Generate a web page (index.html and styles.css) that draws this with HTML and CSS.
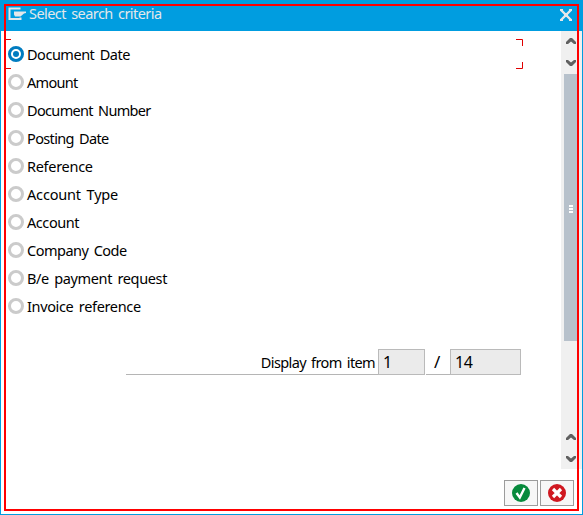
FILE: index.html
```html
<!DOCTYPE html>
<html lang="en">
<head>
<meta charset="utf-8">
<title>Select search criteria</title>
<link rel="stylesheet" href="styles.css">
</head>
<body>
<div class="window">
  <header class="titlebar">
    <svg class="logo" width="18" height="13" viewBox="0 0 18 13"><path d="M12.500 1.500H1.500v10.500h11V10.500" fill="none" stroke="#e4e8ea" stroke-width="2"/><path d="M6 4.500h12v1.500l-2 .5-3.500 3H7L6 7.500z" fill="#e4e8ea"/></svg>
    <h1 class="title">Select search criteria</h1>
    <svg class="close" width="12" height="12" viewBox="0 0 12 12"><path d="M1 1l10 10M11 1L1 11" fill="none" stroke="#e4e8ea" stroke-width="2.400"/><path d="M0 0h3v2H0zM9 0h3v2H9zM0 10h3v2H0zM9 10h3v2H9zM4 4h4v4H4z" fill="#e4e8ea"/></svg>
  </header>
  <div class="body">
    <main class="content">
      <div class="options">
        <label class="option"><i class="radio checked"></i><span class="t1">Document Date</span></label>
        <label class="option"><i class="radio"></i><span class="t2">Amount</span></label>
        <label class="option"><i class="radio"></i><span class="t3">Document Number</span></label>
        <label class="option"><i class="radio"></i><span class="t4">Posting Date</span></label>
        <label class="option"><i class="radio"></i><span class="t5">Reference</span></label>
        <label class="option"><i class="radio"></i><span class="t6">Account Type</span></label>
        <label class="option"><i class="radio"></i><span class="t7">Account</span></label>
        <label class="option"><i class="radio"></i><span class="t8">Company Code</span></label>
        <label class="option"><i class="radio"></i><span class="t9">B/e payment request</span></label>
        <label class="option"><i class="radio"></i><span class="t10">Invoice reference</span></label>
        <svg class="focus" width="517" height="30" viewBox="0 0 517 30"><path d="M0 .5h5M0 29.500h5M510 .5h6.500V7M510 29.500h6.500V23" fill="none" stroke="#e00000"/></svg>
      </div>
      <div class="position">
        <span class="caption"><span class="t11">Display from item</span></span>
        <span class="field current">1</span>
        <span class="slash">/</span>
        <span class="field total">14</span>
      </div>
    </main>
    <aside class="scrollbar">
      <svg class="arrow" width="10" height="6" viewBox="0 0 10 6"><path d="M0 6V4l4-4h2l4 4v2H8L5 3.500 2 6z"/></svg>
      <svg class="arrow down" width="10" height="6" viewBox="0 0 10 6"><path d="M0 0v2l4 4h2l4-4V0H8L5 2.500 2 0z"/></svg>
      <div class="thumb"><i></i><i></i><i></i></div>
      <svg class="arrow last" width="10" height="6" viewBox="0 0 10 6"><path d="M0 6V4l4-4h2l4 4v2H8L5 3.500 2 6z"/></svg>
      <svg class="arrow down" width="10" height="6" viewBox="0 0 10 6"><path d="M0 0v2l4 4h2l4-4V0H8L5 2.500 2 0z"/></svg>
    </aside>
  </div>
  <footer class="actions">
    <span class="button"><svg width="18" height="18" viewBox="0 0 18 18"><circle cx="9" cy="9" r="9" fill="#078a3c"/><path d="M4.500 9l3.300 4.500L12.500 4" fill="none" stroke="#fff" stroke-width="2.400"/></svg></span>
    <span class="button"><svg width="18" height="18" viewBox="0 0 18 18"><circle cx="9" cy="9" r="9" fill="#d01820"/><path d="M5 5l8 8M13 5l-8 8" fill="none" stroke="#fff" stroke-width="3.200"/></svg></span>
  </footer>
  <div class="outline"></div>
</div>
</body>
</html>
```
FILE: styles.css
```css
* { box-sizing: border-box; }
body { margin: 0; font: 14.5px/28px "Noto Sans", sans-serif; word-spacing: 2px; color: #000; overflow: hidden; }
.window { position: relative; width: 583px; height: 515px; border: 1px solid #009de0; background: #fff; display: flex; flex-direction: column; }
.titlebar { height: 30px; flex: none; background: #009de0; display: flex; align-items: flex-start; padding: 6px 10px 0 7px; }
.logo { flex: none; }
.title { margin: -7px 0 0 3px; font-size: 14.5px; letter-spacing: -.55px; line-height: 26px; font-weight: 400; color: #e4e8ea; flex: 1; }
.close { margin-top: 2px; }
.body { display: flex; height: 438px; flex: none; }
.content { width: 560px; padding: 9px 0 0 7px; }
.options { position: relative; height: 309px; }
.option { display: flex; align-items: center; height: 28px; white-space: nowrap; }
.t1 { letter-spacing: -.48px; }
.t2 { letter-spacing: -.68px; }
.t3 { letter-spacing: -.66px; }
.t4 { letter-spacing: -.64px; }
.t5 { letter-spacing: -.29px; }
.t6 { letter-spacing: -.17px; }
.t7 { letter-spacing: -.43px; }
.t8 { letter-spacing: -.5px; }
.t9 { letter-spacing: -.37px; }
.t10 { letter-spacing: -.35px; }
.t11 { letter-spacing: -.62px; }
.radio { width: 16px; height: 16px; border: 2.5px solid #cbcbcb; border-width: 3px; border-radius: 50%; margin-right: 3px; flex: none; display: flex; align-items: center; justify-content: center; }
.checked { border-color: #007cc0; }
.checked::after { content: ""; width: 6px; height: 6px; border-radius: 50%; background: #007cc0; }
.focus { position: absolute; left: -2px; top: -1px; }
.position { display: flex; margin-left: 118px; height: 26px; line-height: 26px; }
.caption { width: 252px; border-bottom: 1px solid #b5b5b5; text-align: right; padding-right: 3px; white-space: nowrap; }
.field { border: 1px solid #bababa; background: #ebebeb; padding-left: 4px; font-size: 16px; line-height: 25px; letter-spacing: -.4px; }
.current { width: 47px; }
.slash { width: 24px; margin-left: 1px; border-bottom: 1px solid #b5b5b5; padding-left: 8px; font-size: 17px; }
.total { width: 71px; }
.scrollbar { width: 21px; background: #f0f0f0; display: flex; flex-direction: column; padding: 7px 0 7px 5px; }
.arrow { fill: #606060; flex: none; }
.down { margin-top: 16px; }
.last { margin-top: auto; }
.thumb { width: 17px; height: 267px; margin: 8px 0 0 -2px; background: #b7c1cb; border-right: 4px solid #f0f0f0; display: flex; flex-direction: column; gap: 1px; align-items: center; justify-content: center; padding-top: 3px; }
.thumb i { width: 4px; height: 2px; background: #fff; }
.actions { display: flex; justify-content: flex-end; gap: 2px; padding: 11px 8px 0 0; }
.button { width: 34px; height: 26px; border: 1px solid #9c9c9c; background: #f7f7f7; display: flex; align-items: center; justify-content: center; }
.outline { position: absolute; left: 3px; top: 3px; width: 575px; height: 507px; border: 2px solid #f00; }
```
